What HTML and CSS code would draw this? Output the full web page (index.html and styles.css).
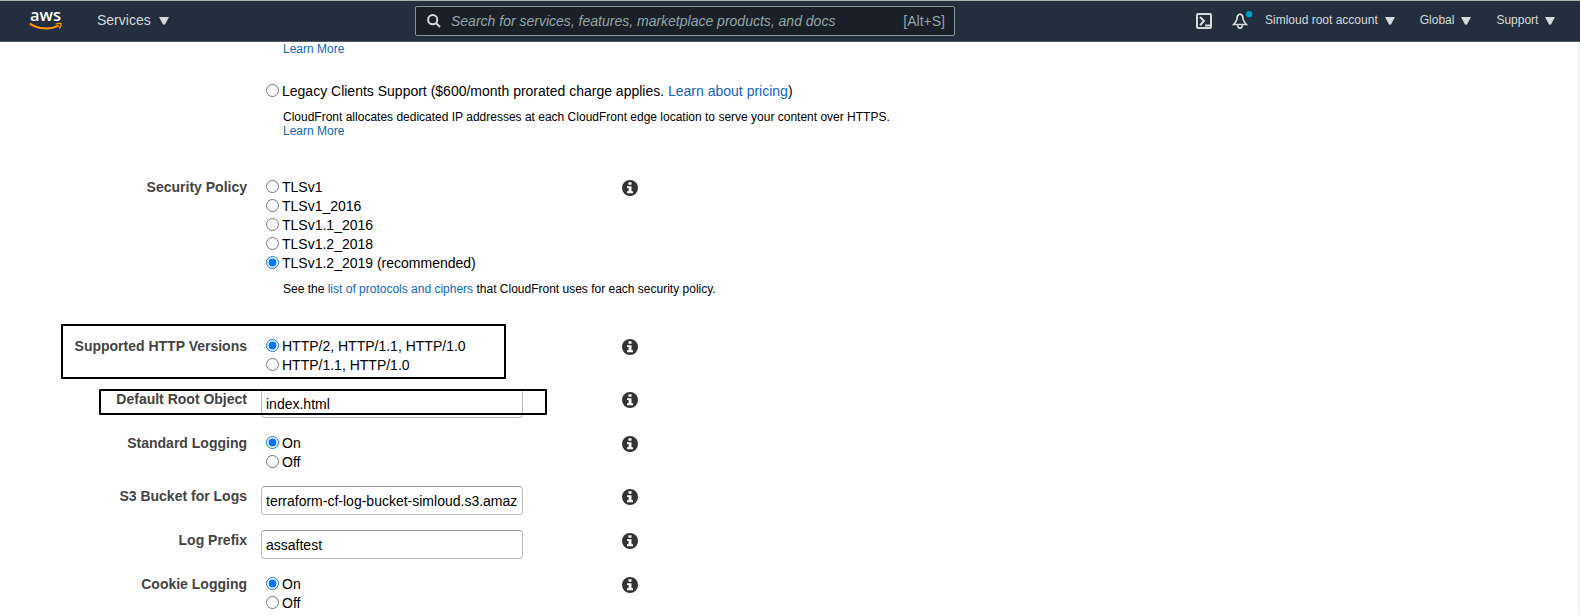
FILE: index.html
```html
<!DOCTYPE html>
<html lang="en">
<head>
<meta charset="utf-8">
<title>CloudFront distribution settings</title>
<link rel="stylesheet" href="styles.css">
</head>
<body>
<svg width="0" height="0" class="defs" aria-hidden="true">
  <symbol id="info" viewBox="0 0 16 16">
    <circle cx="8" cy="8" r="8" fill="#333"/>
    <path d="M6.5 2.2h3v2.6h-3zM5 6.2h4.5v5H11v2H5v-2h1.6V8.1H5z" fill="#fff"/>
  </symbol>
  <symbol id="caret" viewBox="0 0 10 8"><path d="M0 0h10L6 7.6H4z" fill="#d5dbdb"/></symbol>
</svg>
<header class="nav">
  <svg class="logo" viewBox="0 0 34 22" width="34" height="22">
    <text x="1" y="12" textLength="31" lengthAdjust="spacingAndGlyphs" class="logo-text">aws</text>
    <path d="M.8 14.6C9.5 20.4 21 20.8 29.8 16.6" fill="none" stroke="#f90" stroke-width="2"/>
    <path d="M26.6 15.2c2.4-.9 4.5-1 5.4-.6.3 1-.3 3.2-1.6 5" fill="none" stroke="#f90" stroke-width="1.4"/>
  </svg>
  <div class="services">Services<svg class="caret-lg"><use href="#caret"/></svg></div>
  <div class="search">
    <svg width="14" height="14" viewBox="0 0 14 14" fill="none" stroke="#d5dbdb" stroke-width="2"><circle cx="5.7" cy="5.7" r="4.6"/><path d="M9 9l4 4"/></svg>
    <span class="placeholder">Search for services, features, marketplace products, and docs</span>
    <span class="shortcut">[Alt+S]</span>
  </div>
  <svg class="shell" width="16" height="16" viewBox="0 0 16 16" fill="none" stroke="#d5dbdb" stroke-width="2"><rect x="1" y="1" width="14" height="14" rx="1"/><path d="M4 4l4 4-4 4.300M9 12.500h5"/></svg>
  <svg class="bell" width="21" height="19" viewBox="0 0 21 19" fill="none" stroke="#d5dbdb" stroke-width="1.700">
    <path d="M8 3C5.500 3.600 5 5.500 5 7.500S4.200 10.500 1.600 13.500h12.800C11.800 10.500 11 9.500 11 7.500S10.500 3.600 8 3zM5.800 14.500c0 3.600 4.400 3.600 4.400 0"/>
    <circle cx="17.200" cy="3.200" r="3.100" fill="#00a1c9" stroke="none"/>
  </svg>
  <div class="menu account">Simloud root account<svg class="caret-sm"><use href="#caret"/></svg></div>
  <div class="menu region">Global<svg class="caret-sm"><use href="#caret"/></svg></div>
  <div class="menu">Support<svg class="caret-sm"><use href="#caret"/></svg></div>
</header>
<main class="page">
  <div class="form">
    <div class="ssl">
      <div class="help"><a>Learn More</a></div>
      <label class="opt"><input type="radio" name="ssl"><span>Legacy Clients Support ($600/month prorated charge applies. <a>Learn about pricing</a>)</span></label>
      <div class="help">CloudFront allocates dedicated IP addresses at each CloudFront edge location to serve your content over HTTPS.<br><a>Learn More</a></div>
    </div>
    <div class="row policy">
      <div class="label">Security Policy</div>
      <div class="field">
        <label class="opt"><input type="radio" name="tls"><span>TLSv1</span></label>
        <label class="opt"><input type="radio" name="tls"><span>TLSv1_2016</span></label>
        <label class="opt"><input type="radio" name="tls"><span>TLSv1.1_2016</span></label>
        <label class="opt"><input type="radio" name="tls"><span>TLSv1.2_2018</span></label>
        <label class="opt"><input type="radio" name="tls" checked><span>TLSv1.2_2019 (recommended)</span></label>
        <div class="help">See the <a>list of protocols and ciphers</a> that CloudFront uses for each security policy.</div>
      </div>
      <svg class="info"><use href="#info"/></svg>
    </div>
    <div class="row">
      <div class="label">Supported HTTP Versions</div>
      <div class="field">
        <label class="opt"><input type="radio" name="http" checked><span>HTTP/2, HTTP/1.1, HTTP/1.0</span></label>
        <label class="opt"><input type="radio" name="http"><span>HTTP/1.1, HTTP/1.0</span></label>
      </div>
      <svg class="info"><use href="#info"/></svg>
    </div>
    <div class="row">
      <div class="label">Default Root Object</div>
      <div class="field"><input class="text" type="text" value="index.html"></div>
      <svg class="info"><use href="#info"/></svg>
    </div>
    <div class="row">
      <div class="label">Standard Logging</div>
      <div class="field">
        <label class="opt"><input type="radio" name="log" checked><span>On</span></label>
        <label class="opt"><input type="radio" name="log"><span>Off</span></label>
      </div>
      <svg class="info"><use href="#info"/></svg>
    </div>
    <div class="row">
      <div class="label">S3 Bucket for Logs</div>
      <div class="field"><input class="text" type="text" value="terraform-cf-log-bucket-simloud.s3.amazonaws.com"></div>
      <svg class="info"><use href="#info"/></svg>
    </div>
    <div class="row">
      <div class="label">Log Prefix</div>
      <div class="field"><input class="text" type="text" value="assaftest"></div>
      <svg class="info"><use href="#info"/></svg>
    </div>
    <div class="row">
      <div class="label">Cookie Logging</div>
      <div class="field">
        <label class="opt"><input type="radio" name="cookie" checked><span>On</span></label>
        <label class="opt"><input type="radio" name="cookie"><span>Off</span></label>
      </div>
      <svg class="info"><use href="#info"/></svg>
    </div>
  </div>
  <div class="mark mark-http"></div>
  <div class="mark mark-root"></div>
</main>
</body>
</html>
```
FILE: styles.css
```css
* { box-sizing: border-box; }
body {
  margin: 0;
  height: 615px;
  overflow: hidden;
  display: flex;
  flex-direction: column;
  background: #fff;
  color: #000;
  font: 14px/19px "Liberation Sans", Arial, sans-serif;
}
.defs { position: absolute; }
a { color: #146eb4; color: #1166bb; }

.nav {
  flex: none;
  display: flex;
  align-items: flex-start;
  height: 42px;
  background: #232f3e;
  border-top: 1px solid #aab0ac;
  border-bottom: 1px solid #545b64;
  color: #d5dbdb;
  white-space: nowrap;
}
.logo { margin: 8px 0 0 29px; overflow: visible; }
.logo-text { font: 600 17px "Open Sans", "Noto Sans", sans-serif; fill: #fff; }
.services { display: flex; width: 317px; margin: 10px 0 0 34px; }
.caret-lg { width: 10px; height: 8px; margin: 6px 0 0 8px; }
.search {
  display: flex;
  width: 540px;
  height: 30px;
  margin-top: 5px;
  margin-left: 1px;
  padding: 0 9px 0 11px;
  align-items: center;
  background: #1a202a;
  border: 1px solid #879596;
  border-radius: 2px;
  color: #95a5a6;
}
.placeholder { flex: 1; margin-left: 10px; font-style: italic; }
.shell { margin: 12px 0 0 241px; }
.bell { margin: 10px 0 0 20px; }
.menu { display: flex; margin-top: 10px; font-size: 12px; }
.account { margin-left: 12px; }
.menu + .menu { margin-left: 25px; }
.caret-sm { width: 10px; height: 8px; margin: 6px 0 0 7px; }

.page { position: relative; flex: 1; border-right: 2px solid #f0f0f0; }
.form { display: flex; flex-direction: column; gap: 15px; }
.ssl { height: 120px; padding-left: 261px; }
.ssl > .help:first-child { padding-top: 0; margin-bottom: 25px; }
.row { display: grid; grid-template-columns: 247px 361px 16px; column-gap: 0; align-items: start; }
.policy { height: 144px; }
.label { padding-top: 1px; text-align: right; font-weight: bold; color: #444; }
.field { padding-left: 14px; white-space: nowrap; }
.row .info { width: 16px; height: 16px; margin: 3px 0 0 14px; }
.opt { display: flex; height: 19px; }
.opt input { flex: none; width: 13px; height: 13px; margin: 3px 3px 0 5px; }
.opt span { padding-top: 1px; }
.help { padding: 10px 0 0 22px; font-size: 12px; line-height: 14px; }
.text {
  display: block;
  width: 262px;
  height: 29px;
  padding: 0 4px;
  border: 1px solid #bbb;
  border-top-color: #999;
  border-radius: 4px;
  background: #fff;
  color: #000;
  font: inherit;
}
.mark { position: absolute; border: 2px solid #000; border-radius: 1px; }
.mark-http { left: 61px; top: 282px; width: 445px; height: 55px; }
.mark-root { left: 99px; top: 347px; width: 448px; height: 26px; }
```
